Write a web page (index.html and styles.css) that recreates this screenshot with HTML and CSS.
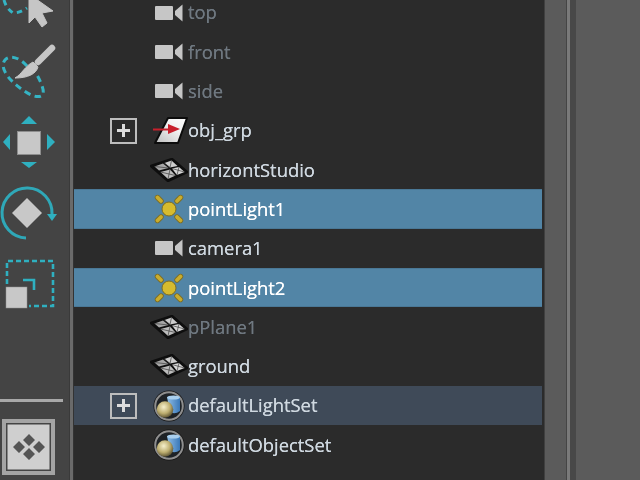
FILE: index.html
```html
<!DOCTYPE html>
<html lang="en">
<head>
<meta charset="utf-8">
<title>Outliner</title>
<link rel="stylesheet" href="styles.css">
</head>
<body>
<svg class="defs" width="0" height="0">
  <defs>
    <radialGradient id="ball" cx="0.42" cy="0.35" r="0.7">
      <stop offset="0" stop-color="#f6f0cc"/><stop offset="0.55" stop-color="#bdae70"/><stop offset="1" stop-color="#4d452a"/>
    </radialGradient>
    <linearGradient id="cyl" x1="0" x2="1" y1="0" y2="0">
      <stop offset="0" stop-color="#8fbde6"/><stop offset="1" stop-color="#3a78b8"/>
    </linearGradient>
    <linearGradient id="sheet" x1="0" x2="1" y1="1" y2="0">
      <stop offset="0" stop-color="#bdbdbd"/><stop offset="0.6" stop-color="#f2f2f2"/><stop offset="1" stop-color="#ffffff"/>
    </linearGradient>
    <g id="camera">
      <rect x="0" y="2" width="18" height="14" rx="1" fill="#c6c6c6"/>
      <path d="M20 7 L27.500 0.500 V17.500 L20 11 Z" fill="#c6c6c6"/>
    </g>
    <g id="light">
      <g stroke="#7d6c22" stroke-width="5.400" stroke-linecap="round">
        <path d="M4.500 4.500 L8 8"/><path d="M27.500 4.500 L24 8"/><path d="M4.500 27.500 L8 24"/><path d="M27.500 27.500 L24 24"/>
      </g>
      <g stroke="#c9ad2e" stroke-width="3.800" stroke-linecap="round">
        <path d="M4.500 4.500 L8 8"/><path d="M27.500 4.500 L24 8"/><path d="M4.500 27.500 L8 24"/><path d="M27.500 27.500 L24 24"/>
      </g>
      <circle cx="16" cy="16" r="7" fill="#d6bb2e" stroke="#7d6c22" stroke-width="1"/>
    </g>
    <g id="mesh">
      <path d="M1 8 L22 1 L37 14 L18 23 Z" fill="#0e0e0e" stroke="#0e0e0e" stroke-width="2.500" stroke-linejoin="round"/>
      <path d="M4.500 8.500 L13 5.500 L18.500 10 L9 12.500 Z" fill="#a6a6a6"/>
      <path d="M14.500 5 L21.500 2.500 L27.500 8 L20 9.500 Z" fill="#cdcdcd"/>
      <path d="M22 10.500 L29 9 L34.500 14 L27 17 Z" fill="#d6d6d6"/>
      <path d="M10.500 14 L20 11.500 L25.500 17.500 L18 21 Z" fill="#bcbcbc"/>
      <path d="M4.500 8.500 L18.500 10 M14.500 5 L20 9.500 L21.500 2.500 M22 10.500 L34.500 14 M29 9 L27 17 M20 11.500 L18 21 M10.500 14 L25.500 17.500" stroke="#3c3c3c" stroke-width="0.700" fill="none"/>
    </g>
    <g id="set">
      <circle cx="16" cy="16" r="15.500" fill="#141414"/>
      <circle cx="16" cy="16" r="13.800" fill="#1e2226" stroke="#8e8e8e" stroke-width="2"/>
      <path d="M14 7 H27 V21 Q22 25 17 22 Z" fill="url(#cyl)"/>
      <ellipse cx="20.500" cy="7.500" rx="6.500" ry="2" fill="#a9cfee"/>
      <circle cx="12" cy="19.500" r="8.300" fill="url(#ball)"/>
    </g>
  </defs>
</svg>
<div class="app">
  <aside class="toolbar">
    <svg class="tool" viewBox="0 0 64 30" width="64" height="30">
      <path d="M4 0 Q6 8 13 13 Q20 13 27 8" fill="none" stroke="#35b4c4" stroke-width="3" stroke-dasharray="5.500 4.500" stroke-linecap="butt"/>
      <path d="M29 -6 V23 L35 17 L42 27 L47 23 L42 13 L53 11 Z" fill="#c6c6c6" stroke="#c6c6c6" stroke-linejoin="round"/>
    </svg>
    <svg class="tool" viewBox="0 30 64 75" width="64" height="75">
      <path d="M27 66 C20 58 10 54 5 60 C0 66 6 76 14 83 C22 90 34 99 41 96 C46 94 42 84 37 75" fill="none" stroke="#35b4c4" stroke-width="3" stroke-dasharray="6.500 4.500" stroke-linecap="butt"/>
      <path d="M52 48 L38 62" stroke="#c6c6c6" stroke-width="6.500" stroke-linecap="round"/>
      <path d="M33 62 L38 67 C36 74 28 78 15 78 C22 74 25 66 33 62 Z" fill="#c6c6c6" stroke="#c6c6c6"/>
    </svg>
    <svg class="tool" viewBox="0 105 64 70" width="64" height="70">
      <path d="M29 116 L37 124 H21 Z M3 142 L10 134 V150 Z M55 142 L47 134 V150 Z M21 162 H37 L29 168 Z" fill="#2fb0c0"/>
      <rect x="17.500" y="131.500" width="23" height="23" fill="#c8c8c8" stroke="#8e8e8e"/>
    </svg>
    <svg class="tool" viewBox="0 175 64 70" width="64" height="70">
      <path d="M26 238 A25 25 0 1 1 52 214" fill="none" stroke="#2fa8b8" stroke-width="3"/>
      <path d="M47 214 H57 L52 221 Z" fill="#2fb0c0"/>
      <path d="M27 198 L42 213 L27 228 L12 213 Z" fill="#c8c8c8"/>
    </svg>
    <svg class="tool" viewBox="0 245 64 70" width="64" height="70">
      <path d="M7 284 V261 H53 V306 H29" fill="none" stroke="#2fb0c0" stroke-width="2.600" stroke-dasharray="5 3"/>
      <path d="M23 280 H34 V290" fill="none" stroke="#2fb0c0" stroke-width="2.600"/>
      <rect x="6" y="287" width="21" height="21" fill="#c8c8c8" stroke="#8e8e8e" stroke-width="0.500"/>
    </svg>
    <div class="sep"></div>
    <button class="layout-btn" type="button" aria-label="Layouts">
      <svg viewBox="0 0 32 28" width="32" height="28">
        <path d="M16 1 L22 7 L16 13 L10 7 Z M6 8 L12 14 L6 20 L0 14 Z M26 8 L32 14 L26 20 L20 14 Z M16 15 L22 21 L16 27 L10 21 Z" fill="#555555"/>
      </svg>
    </button>
  </aside>
  <div class="gutter"></div>
  <main class="outliner">
    <ul class="tree">
      <li class="row dim"><span class="exp"></span><span class="slot"><svg viewBox="0 0 28 18" width="28" height="18"><use href="#camera"/></svg></span><span class="label">top</span></li>
      <li class="row dim"><span class="exp"></span><span class="slot"><svg viewBox="0 0 28 18" width="28" height="18"><use href="#camera"/></svg></span><span class="label">front</span></li>
      <li class="row dim"><span class="exp"></span><span class="slot"><svg viewBox="0 0 28 18" width="28" height="18"><use href="#camera"/></svg></span><span class="label">side</span></li>
      <li class="row"><span class="exp on"></span><span class="slot"><svg viewBox="-4 0 40 30" width="40" height="30"><path d="M15 2 H34 L25 27 H2 Z" fill="url(#sheet)" stroke="#0c0c0c" stroke-width="2" stroke-linejoin="round"/><path d="M0 13.500 H17" stroke="#c8202c" stroke-width="2"/><path d="M15 8 L27 13 L15 18 Z" fill="#c8202c"/></svg></span><span class="label">obj_grp</span></li>
      <li class="row"><span class="exp"></span><span class="slot"><svg viewBox="0 0 38 24" width="38" height="24"><use href="#mesh"/></svg></span><span class="label">horizontStudio</span></li>
      <li class="row sel"><span class="exp"></span><span class="slot"><svg viewBox="0 0 32 32" width="32" height="32"><use href="#light"/></svg></span><span class="label">pointLight1</span></li>
      <li class="row"><span class="exp"></span><span class="slot"><svg viewBox="0 0 28 18" width="28" height="18"><use href="#camera"/></svg></span><span class="label">camera1</span></li>
      <li class="row sel"><span class="exp"></span><span class="slot"><svg viewBox="0 0 32 32" width="32" height="32"><use href="#light"/></svg></span><span class="label">pointLight2</span></li>
      <li class="row dim"><span class="exp"></span><span class="slot"><svg viewBox="0 0 38 24" width="38" height="24"><use href="#mesh"/></svg></span><span class="label">pPlane1</span></li>
      <li class="row"><span class="exp"></span><span class="slot"><svg viewBox="0 0 38 24" width="38" height="24"><use href="#mesh"/></svg></span><span class="label">ground</span></li>
      <li class="row hl"><span class="exp on"></span><span class="slot"><svg viewBox="0 0 32 32" width="32" height="32"><use href="#set"/></svg></span><span class="label">defaultLightSet</span></li>
      <li class="row"><span class="exp"></span><span class="slot"><svg viewBox="0 0 32 32" width="32" height="32"><use href="#set"/></svg></span><span class="label">defaultObjectSet</span></li>
    </ul>
  </main>
  <div class="scroll"></div>
  <div class="stripe a"></div>
  <div class="stripe b"></div>
  <div class="stripe c"></div>
  <div class="rest"></div>
</div>
</body>
</html>
```
FILE: styles.css
```css
html, body { margin: 0; height: 100%; overflow: hidden; background: #5b5b5b; }
.defs { position: absolute; }
.app { display: flex; height: 480px; width: 640px; overflow: hidden; filter: blur(0.4px); }
.toolbar { width: 70px; flex: none; box-sizing: border-box; background: #444444; border-right: 1px solid #3a3a3a; display: flex; flex-direction: column; }
.tool { display: block; flex: none; }
.sep { height: 3px; width: 63px; background: #a8a8a8; margin-top: 84px; flex: none; }
.layout-btn { margin: 17px 0 0 2px; padding: 0; width: 53px; height: 56px; flex: none; box-sizing: border-box; background: #cfcfcf; border: 4px solid #a4a4a4; box-shadow: inset 0 0 0 1.500px #444; display: flex; align-items: center; justify-content: center; }
.gutter { width: 4px; flex: none; box-sizing: border-box; background: #6a6a6a; border-right: 1px solid #333; }
.outliner { width: 470px; flex: none; background: #2b2b2b; overflow: hidden; }
.tree { list-style: none; margin: -7px 0 0; padding: 0 2px 0 0; }
.row { height: 39.3px; display: flex; align-items: center; padding-left: 36px; font: 18.4px/1 "Open Sans", "Noto Sans", sans-serif; color: #cfd8e0; }
.exp { flex: none; width: 27px; height: 26px; box-sizing: border-box; position: relative; }
.exp.on { border: 2px solid #bdbdbd; }
.exp.on::before { content: ""; position: absolute; left: 5px; top: 9.500px; width: 13px; height: 3px; background: #dcdcdc; }
.exp.on::after { content: ""; position: absolute; left: 10px; top: 4.500px; width: 3px; height: 13px; background: #dcdcdc; }
.slot { flex: none; width: 36px; margin-left: 14px; display: flex; justify-content: center; align-items: center; height: 26px; }
.slot svg { flex: none; display: block; }
.label { margin-left: 1px; text-shadow: 0 0 0.5px currentColor; }
.dim { color: #6f7880; }
.sel { background: #5285a6; color: #fff; box-shadow: inset 0 1px #4a7896, inset 0 -1px #4a7896; }
.hl { background: #3f4a58; }
.scroll { width: 21px; flex: none; background: #5b5b5b; border-left: 1px solid #404040; }
.stripe { flex: none; }
.stripe.a { width: 1px; background: #454545; }
.stripe.b { width: 3px; background: #7a7a7a; }
.stripe.c { width: 6px; background: #484848; }
.rest { flex: 1; background: #5b5b5b; }
```
